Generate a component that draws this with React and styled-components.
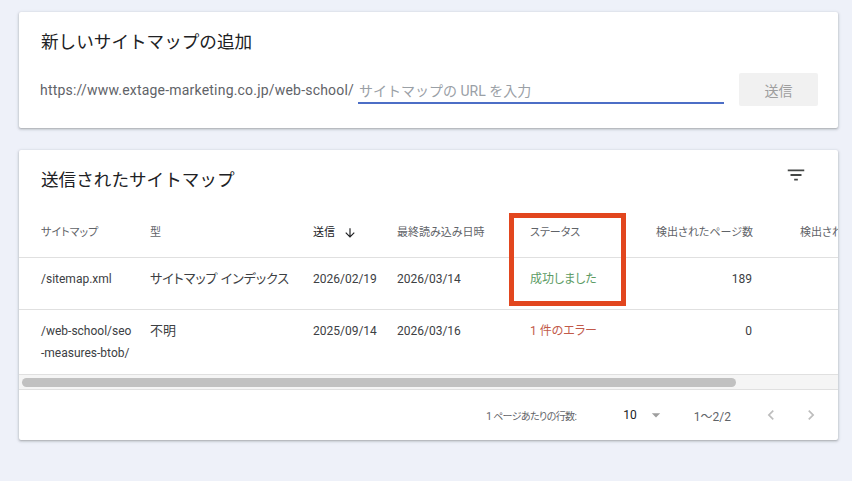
import React from "react";
import styled, { createGlobalStyle } from "styled-components";

const Global = createGlobalStyle`
  html, body { margin: 0; padding: 0; background: #eef1f9; }
  body { font-family: Roboto, "Noto Sans CJK JP", sans-serif; color: #202124; }
  * { box-sizing: border-box; }
`;

const Page = styled.div`
  padding: 12px 14px 40px 19px;
  display: flex;
  flex-direction: column;
  gap: 22px;
`;

const Card = styled.section`
  position: relative;
  background: #fff;
  border-radius: 2px;
  box-shadow: 0 1px 2px rgba(60, 64, 67, 0.3), 0 1px 3px 1px rgba(60, 64, 67, 0.12);
  overflow: hidden;
`;

const AddCard = styled(Card)`
  padding: 18px 20px 22px 22px;
`;

const Title = styled.h2`
  margin: 0;
  font-size: 17.6px;
  line-height: 24px;
  font-weight: 400;
  color: #202124;
`;

const AddRow = styled.div`
  margin-top: 19px;
  display: flex;
  align-items: center;
  height: 33px;
`;

const Prefix = styled.span`
  font-size: 14px;
  letter-spacing: 0.2px;
  color: #5f6368;
  white-space: nowrap;
  margin-left: -1px;
  margin-right: 4px;
`;

const Input = styled.input`
  flex: 1;
  height: 28px;
  padding: 4px 1px 0;
  border: none;
  border-bottom: 2px solid #4c6ec6;
  outline: none;
  font-family: Roboto, "Noto Sans CJK JP", sans-serif;
  font-size: 14px;
  color: #202124;
  background: transparent;
  &::placeholder { color: #9aa0a6; }
`;

const SendButton = styled.button`
  margin-left: 15px;
  width: 79px;
  height: 33px;
  border: none;
  border-radius: 2px;
  background: #f1f1f1;
  color: #9e9e9e;
  font-family: Roboto, "Noto Sans CJK JP", sans-serif;
  font-size: 14px;
`;

const TitleRow = styled.div`
  height: 56px;
  padding: 3px 22px 0;
  display: flex;
  align-items: center;
  justify-content: space-between;
`;

const IconButton = styled.button`
  width: 40px;
  height: 40px;
  margin-bottom: 9px;
  border: none;
  background: transparent;
  display: flex;
  align-items: center;
  justify-content: center;
  padding: 0;
  color: #444746;
`;

const Viewport = styled.div`
  overflow: hidden;
`;

const TableInner = styled.div`
  width: 936px;
`;

const Row = styled.div`
  display: grid;
  grid-template-columns: 119px 163px 84px 133px 126px 120px 191px;
  min-height: 52px;
  border-bottom: ${(p) => (p.$last ? "none" : "1px solid #e0e0e0")};
  align-items: ${(p) => (p.$head ? "center" : "start")};
`;

const Cell = styled.div`
  padding: ${(p) => (p.$head ? "2px 12px 0" : "10px 12px")};
  font-size: ${(p) => (p.$head ? "11px" : p.$wide ? "13px" : "12px")};
  line-height: 22px;
  color: ${(p) => p.$color || (p.$head ? "#5f6368" : "#3c4043")};
  text-align: ${(p) => (p.$right ? "right" : "left")};
  white-space: nowrap;
  font-feature-settings: "palt";
  &:first-child { padding-left: 22px; }
  &:nth-child(7) { padding-left: 36px; }
`;

const SortLabel = styled.span`
  display: inline-flex;
  align-items: center;
  gap: 8px;
  color: #202124;
`;

const ScrollTrack = styled.div`
  height: 16px;
  border-top: 1px solid #e0e0e0;
  border-bottom: 1px solid #e0e0e0;
  background: #f5f5f5;
  padding: 3px 0 0 3px;
`;

const ScrollThumb = styled.div`
  height: 9px;
  border-radius: 5px;
  background: #c1c1c1;
`;

const Footer = styled.div`
  height: 50px;
  display: flex;
  align-items: center;
  justify-content: flex-end;
  padding-right: 16px;
  font-size: 10px;
  color: #5f6368;
  font-feature-settings: "palt";
`;

const PerPage = styled.span`
  letter-spacing: -0.6px;
  margin-right: 47px;
`;

const PageSize = styled.span`
  display: inline-flex;
  align-items: center;
  font-size: 12px;
  color: #202124;
  gap: 9px;
  margin-right: 28px;
`;

const Range = styled.span`
  font-size: 12px;
  color: #5f6368;
  margin-right: 29px;
`;

const NavButton = styled.span`
  display: inline-flex;
  width: 22px;
  justify-content: center;
  color: #bdbdbd;
  margin-left: ${(p) => (p.$gap ? "18px" : "0")};
`;

const Highlight = styled.div`
  position: absolute;
  left: 490px;
  top: 63px;
  width: 117px;
  height: 93px;
  border: 5px solid #e2461e;
  pointer-events: none;
`;

const FilterIcon = () => (
  <svg width="22" height="22" viewBox="0 0 24 24" fill="currentColor">
    <path d="M10 18h4v-2h-4v2zM3 6v2h18V6H3zm3 7h12v-2H6v2z" />
  </svg>
);

const ArrowDown = () => (
  <svg width="14" height="14" viewBox="0 0 24 24" fill="#202124">
    <path d="M20 12l-1.41-1.41L13 16.17V4h-2v12.17l-5.58-5.59L4 12l8 8 8-8z" />
  </svg>
);

const Caret = () => (
  <svg width="20" height="20" viewBox="0 0 24 24" fill="#9e9e9e">
    <path d="M7 10l5 5 5-5z" />
  </svg>
);

const ChevronLeft = () => (
  <svg width="20" height="20" viewBox="0 0 24 24" fill="currentColor">
    <path d="M15.41 7.41L14 6l-6 6 6 6 1.41-1.41L10.83 12z" />
  </svg>
);

const ChevronRight = () => (
  <svg width="20" height="20" viewBox="0 0 24 24" fill="currentColor">
    <path d="M10 6L8.59 7.41 13.17 12l-4.58 4.59L10 18l6-6z" />
  </svg>
);

const rows = [
  {
    path: ["/sitemap.xml"],
    type: "サイトマップ インデックス",
    sent: "2026/02/19",
    read: "2026/03/14",
    status: "成功しました",
    statusColor: "#5c9b64",
    pages: "189",
  },
  {
    path: ["/web-school/seo", "-measures-btob/"],
    type: "不明",
    sent: "2025/09/14",
    read: "2026/03/16",
    status: "1 件のエラー",
    statusColor: "#c25a4a",
    pages: "0",
  },
];

export default function App() {
  return (
    <>
      <Global />
      <Page>
        <AddCard>
          <Title>新しいサイトマップの追加</Title>
          <AddRow>
            <Prefix>https://www.extage-marketing.co.jp/web-school/</Prefix>
            <Input placeholder="サイトマップの URL を入力" />
            <SendButton>送信</SendButton>
          </AddRow>
        </AddCard>

        <Card>
          <TitleRow>
            <Title>送信されたサイトマップ</Title>
            <IconButton aria-label="フィルタ">
              <FilterIcon />
            </IconButton>
          </TitleRow>
          <Viewport>
            <TableInner>
              <Row $head>
                <Cell $head>サイトマップ</Cell>
                <Cell $head>型</Cell>
                <Cell $head>
                  <SortLabel>
                    送信 <ArrowDown />
                  </SortLabel>
                </Cell>
                <Cell $head>最終読み込み日時</Cell>
                <Cell $head>ステータス</Cell>
                <Cell $head $right>検出されたページ数</Cell>
                <Cell $head>検出された動画数</Cell>
              </Row>
              {rows.map((r, i) => (
                <Row key={i} $last={i === rows.length - 1}>
                  <Cell>
                    {r.path.map((p, j) => (
                      <div key={j}>{p}</div>
                    ))}
                  </Cell>
                  <Cell $wide>{r.type}</Cell>
                  <Cell>{r.sent}</Cell>
                  <Cell>{r.read}</Cell>
                  <Cell $color={r.statusColor}>{r.status}</Cell>
                  <Cell $right>{r.pages}</Cell>
                  <Cell />
                </Row>
              ))}
            </TableInner>
          </Viewport>
          <ScrollTrack>
            <ScrollThumb style={{ width: `${Math.round((819 / 936) * 816)}px` }} />
          </ScrollTrack>
          <Footer>
            <PerPage>1 ページあたりの行数:</PerPage>
            <PageSize>
              10 <Caret />
            </PageSize>
            <Range>1〜2/2</Range>
            <NavButton>
              <ChevronLeft />
            </NavButton>
            <NavButton $gap>
              <ChevronRight />
            </NavButton>
          </Footer>
          <Highlight />
        </Card>
      </Page>
    </>
  );
}
